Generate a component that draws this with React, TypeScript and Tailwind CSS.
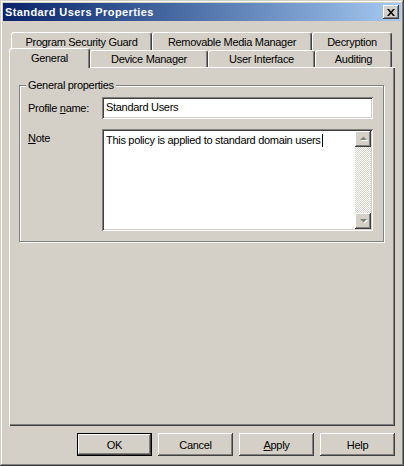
import clsx from 'clsx'

const raised =
  'shadow-[inset_-1px_-1px_0_#404040,inset_1px_1px_0_#ffffff,inset_-2px_-2px_0_#808080,inset_2px_2px_0_#d4d0c8]'
const sunken =
  'shadow-[inset_1px_1px_0_#808080,inset_-1px_-1px_0_#ffffff,inset_2px_2px_0_#404040,inset_-2px_-2px_0_#d4d0c8]'

function Tab({ label, className, selected }: { label: string; className: string; selected?: boolean }) {
  return (
    <div
      className={clsx(
        'flex items-center justify-center shrink-0 rounded-t-[3px] border-l border-t border-r border-white border-r-[#404040] bg-[#d4d0c8] shadow-[inset_-1px_0_0_#808080]',
        selected ? 'relative z-10 h-[20px] -mb-px pb-[2px]' : 'h-full',
        className
      )}
    >
      {label}
    </div>
  )
}

function Button({ children, primary }: { children: React.ReactNode; primary?: boolean }) {
  return (
    <div
      className={clsx(
        'w-[75px] h-[23px] flex items-center justify-center bg-[#d4d0c8]',
        primary ? 'border border-black' : ''
      )}
    >
      <div className={clsx('w-full h-full flex items-center justify-center', raised)}>{children}</div>
    </div>
  )
}

function Arrow({ down }: { down?: boolean }) {
  return (
    <div className={clsx('w-[16px] h-[16px] flex items-center justify-center bg-[#d4d0c8]', raised)}>
      <svg width="9" height="6" viewBox="0 0 9 6">
        {down ? (
          <>
            <polygon points="2,2 9,2 5.5,5.5" fill="#ffffff" />
            <polygon points="1,1 8,1 4.5,4.5" fill="#808080" />
          </>
        ) : (
          <>
            <polygon points="2,5 9,5 5.5,1.5" fill="#ffffff" />
            <polygon points="1,4 8,4 4.5,0.5" fill="#808080" />
          </>
        )}
      </svg>
    </div>
  )
}

export default function App() {
  return (
    <div
      className="w-[404px] h-[466px] p-[3px] flex flex-col bg-[#d4d0c8] text-[11px] leading-[14px] tracking-[-0.3px] text-black [font-family:'Liberation_Sans',Arial,sans-serif] shadow-[inset_-1px_-1px_0_#404040,inset_1px_1px_0_#d4d0c8,inset_-2px_-2px_0_#808080,inset_2px_2px_0_#ffffff]"
    >
      {/* Title bar */}
      <div className="h-[18px] flex items-center pl-[2px] pr-[2px] bg-linear-to-r from-[#0a246a] to-[#a6caf0]">
        <span className="flex-1 font-bold text-white text-[11px] tracking-[0.4px]">Standard Users Properties</span>
        <div className={clsx('w-[16px] h-[14px] flex items-center justify-center bg-[#d4d0c8]', raised)}>
          <svg width="8" height="7" viewBox="0 0 8 7">
            <path d="M0 0h2l2 2.5L6 0h2L5 3.5 8 7H6L4 4.5 2 7H0l3-3.5z" fill="#000" />
          </svg>
        </div>
      </div>

      {/* Tabs */}
      <div className="mx-[6px] mt-[11px] flex flex-col">
        <div className="flex h-[18px] pl-[2px]">
          <Tab label="Program Security Guard" className="w-[141px]" />
          <Tab label="Removable Media Manager" className="w-[160px]" />
          <Tab label="Decryption" className="w-[80px]" />
        </div>
        <div className="flex items-end h-[17px]">
          <Tab label="General" className="w-[81px]" selected />
          <Tab label="Device Manager" className="w-[118px]" />
          <Tab label="User Interface" className="w-[107px]" />
          <Tab label="Auditing" className="w-[77px]" />
        </div>

        {/* Panel */}
        <div className="h-[359px] flex flex-col bg-[#d4d0c8] shadow-[inset_1px_1px_0_#ffffff,inset_-1px_-1px_0_#404040,inset_-2px_-2px_0_#808080]">
          <div className="relative ml-[10px] mt-[18px] w-[365px] h-[157px] border border-[#808080] shadow-[1px_1px_0_#ffffff,inset_1px_1px_0_#ffffff] pl-[8px] pr-[10px] pt-[11px]">
            <span className="absolute left-[6px] top-[-8px] px-[2px] bg-[#d4d0c8]">General properties</span>
            <div className="flex items-center">
              <span className="w-[74px] shrink-0">
                Profile <u>n</u>ame:
              </span>
              <div className={clsx('flex-1 h-[22px] bg-white pl-[4px] pt-[3px]', sunken)}>Standard Users</div>
            </div>
            <div className="flex mt-[10px]">
              <span className="w-[74px] shrink-0 pt-[2px]">
                <u>N</u>ote
              </span>
              <div className={clsx('flex-1 h-[102px] bg-white p-[2px] flex', sunken)}>
                <div className="flex-1 pl-[2px] pt-[2px] flex items-start">
                  <span>This policy is applied to standard domain users</span>
                  <span className="inline-block w-px h-[13px] bg-black ml-px mt-px" />
                </div>
                <div className="w-[16px] flex flex-col">
                  <Arrow />
                  <div className="flex-1 bg-[repeating-conic-gradient(#d4d0c8_0%_25%,#ffffff_0%_50%)] bg-[length:2px_2px]" />
                  <Arrow down />
                </div>
              </div>
            </div>
          </div>
        </div>
      </div>

      {/* Buttons */}
      <div className="mt-[7px] mr-[6px] flex justify-end gap-[6px]">
        <Button primary>OK</Button>
        <Button>Cancel</Button>
        <Button>
          <span>
            <u>A</u>pply
          </span>
        </Button>
        <Button>Help</Button>
      </div>
    </div>
  )
}
